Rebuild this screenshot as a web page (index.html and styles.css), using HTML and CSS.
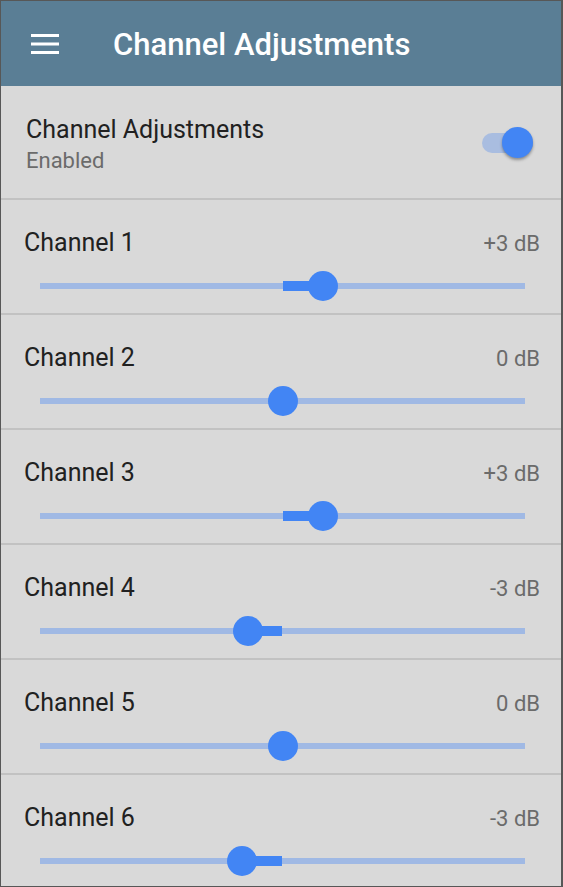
FILE: index.html
```html
<!DOCTYPE html>
<html lang="en">
<head>
    <meta charset="UTF-8">
    <meta name="viewport" content="width=device-width, initial-scale=1.0">
    <title>Channel Adjustments</title>
    <link rel="stylesheet" href="styles.css">
</head>
<body>
    <div class="screen">
        <!-- App bar -->
        <header class="app-bar">
            <svg class="menu-icon" width="28" height="20" viewBox="0 0 28 20">
                <rect x="0" y="0" width="28" height="3" fill="#fff"/>
                <rect x="0" y="8.5" width="28" height="3" fill="#fff"/>
                <rect x="0" y="17" width="28" height="3" fill="#fff"/>
            </svg>
            <h1>Channel Adjustments</h1>
        </header>

        <!-- Master switch -->
        <div class="row switch-row">
            <div class="switch-text">
                <p class="label">Channel Adjustments</p>
                <p class="summary">Enabled</p>
            </div>
            <div class="switch on">
                <div class="switch-track"></div>
                <div class="switch-thumb"></div>
            </div>
        </div>

        <div class="row channel">
            <div class="channel-head">
                <p class="label">Channel 1</p>
                <span class="value">+3 dB</span>
            </div>
            <div class="slider">
                <div class="slider-track"></div>
                <div class="slider-fill" style="left: 50%; width: 8.33%;"></div>
                <div class="slider-thumb" style="left: 58.33%;"></div>
            </div>
        </div>

        <div class="row channel">
            <div class="channel-head">
                <p class="label">Channel 2</p>
                <span class="value">0 dB</span>
            </div>
            <div class="slider">
                <div class="slider-track"></div>
                <div class="slider-thumb" style="left: 50%;"></div>
            </div>
        </div>

        <div class="row channel">
            <div class="channel-head">
                <p class="label">Channel 3</p>
                <span class="value">+3 dB</span>
            </div>
            <div class="slider">
                <div class="slider-track"></div>
                <div class="slider-fill" style="left: 50%; width: 8.33%;"></div>
                <div class="slider-thumb" style="left: 58.33%;"></div>
            </div>
        </div>

        <div class="row channel">
            <div class="channel-head">
                <p class="label">Channel 4</p>
                <span class="value">-3 dB</span>
            </div>
            <div class="slider">
                <div class="slider-track"></div>
                <div class="slider-fill" style="left: 42.9%; width: 7.1%;"></div>
                <div class="slider-thumb" style="left: 42.9%;"></div>
            </div>
        </div>

        <div class="row channel">
            <div class="channel-head">
                <p class="label">Channel 5</p>
                <span class="value">0 dB</span>
            </div>
            <div class="slider">
                <div class="slider-track"></div>
                <div class="slider-thumb" style="left: 50%;"></div>
            </div>
        </div>

        <div class="row channel">
            <div class="channel-head">
                <p class="label">Channel 6</p>
                <span class="value">-3 dB</span>
            </div>
            <div class="slider">
                <div class="slider-track"></div>
                <div class="slider-fill" style="left: 41.67%; width: 8.33%;"></div>
                <div class="slider-thumb" style="left: 41.67%;"></div>
            </div>
        </div>
    </div>
</body>
</html>
```

FILE: styles.css
```css
* {
    box-sizing: border-box;
}
body {
    margin: 0;
    font-family: Roboto, "Noto Sans", sans-serif;
    background-color: #d9d9d9;
}
p {
    margin: 0;
}
.screen {
    width: 563px;
    height: 887px;
    border: 1px solid #575757;
    border-right-width: 2px;
    background-color: #d9d9d9;
    overflow: hidden;
}
.app-bar {
    height: 85px;
    background-color: #5a7e95;
    display: flex;
    align-items: center;
    padding: 2px 0 0 30px;
}
.menu-icon {
    display: block;
    margin-top: -2px;
}
.app-bar h1 {
    margin: 0 0 0 54px;
    font-size: 31px;
    font-weight: 500;
    color: #fff;
    line-height: 36px;
}
.row {
    height: 115px;
    border-bottom: 2px solid #c2c2c2;
}
.label {
    font-size: 25px;
    line-height: 29px;
    color: #212121;
}
.switch-row {
    height: 114px;
    display: flex;
    justify-content: space-between;
    align-items: flex-start;
    padding: 29px 28px 0 25px;
}
.summary {
    margin-top: 4px;
    font-size: 22px;
    line-height: 26px;
    color: #6b6b6b;
}
.switch {
    position: relative;
    width: 51px;
    height: 31px;
    margin-top: 12px;
}
.switch-track {
    position: absolute;
    left: 0;
    right: 0;
    top: 6px;
    height: 20px;
    border-radius: 10px;
    background-color: #a9bde0;
}
.switch-thumb {
    position: absolute;
    right: 0;
    top: 0;
    width: 31px;
    height: 31px;
    border-radius: 50%;
    background-color: #4285f4;
    box-shadow: 0 2px 3px rgba(0, 0, 0, 0.35);
}
.channel {
    padding: 28px 21px 0 23px;
}
.channel-head {
    display: flex;
    justify-content: space-between;
    align-items: baseline;
}
.value {
    font-size: 22px;
    color: #6b6b6b;
}
.slider {
    position: relative;
    height: 30px;
    margin: 14px 15px 0 16px;
}
.slider-track {
    position: absolute;
    left: 0;
    right: 0;
    top: 12px;
    height: 6px;
    background-color: #a0b9e4;
}
.slider-fill {
    position: absolute;
    top: 10px;
    height: 10px;
    background-color: #4285f4;
}
.slider-thumb {
    position: absolute;
    top: 0;
    width: 30px;
    height: 30px;
    margin-left: -15px;
    border-radius: 50%;
    background-color: #4285f4;
}
```
